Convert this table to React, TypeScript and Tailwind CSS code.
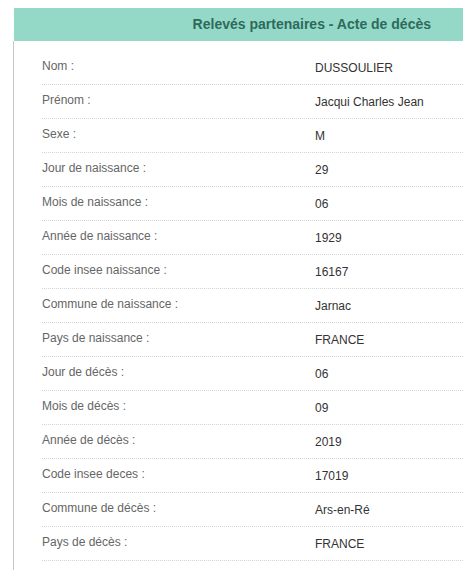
const ROWS: [string, string][] = [
  ["Nom :", "DUSSOULIER"],
  ["Prénom :", "Jacqui Charles Jean"],
  ["Sexe :", "M"],
  ["Jour de naissance :", "29"],
  ["Mois de naissance :", "06"],
  ["Année de naissance :", "1929"],
  ["Code insee naissance :", "16167"],
  ["Commune de naissance :", "Jarnac"],
  ["Pays de naissance :", "FRANCE"],
  ["Jour de décès :", "06"],
  ["Mois de décès :", "09"],
  ["Année de décès :", "2019"],
  ["Code insee deces :", "17019"],
  ["Commune de décès :", "Ars-en-Ré"],
  ["Pays de décès :", "FRANCE"],
];

export default function App() {
  return (
    <div
      className="h-[570px] w-[463px] overflow-hidden bg-white pt-2 pl-[13px]"
      style={{ fontFamily: '"Liberation Sans", Arial, sans-serif' }}
    >
      <div className="ml-px flex h-[33px] items-center justify-end bg-[#94d9c8] pr-[32px]">
        <h2 className="text-[14px] font-bold text-[#2e6a5b]">
          Relevés partenaires - Acte de décès
        </h2>
      </div>

      <div className="h-full border-l border-[#c8c8c8] pt-[10px] pl-[28px]">
        {ROWS.map(([label, value]) => (
          <div
            key={label}
            className="flex h-[34px] items-center border-b border-dotted border-[#d2d2d2] pt-px text-[12px]"
          >
            <span className="mb-[5px] w-[273px] text-[#666666]">{label}</span>
            <span className="text-[#333333]">{value}</span>
          </div>
        ))}
      </div>
    </div>
  );
}
